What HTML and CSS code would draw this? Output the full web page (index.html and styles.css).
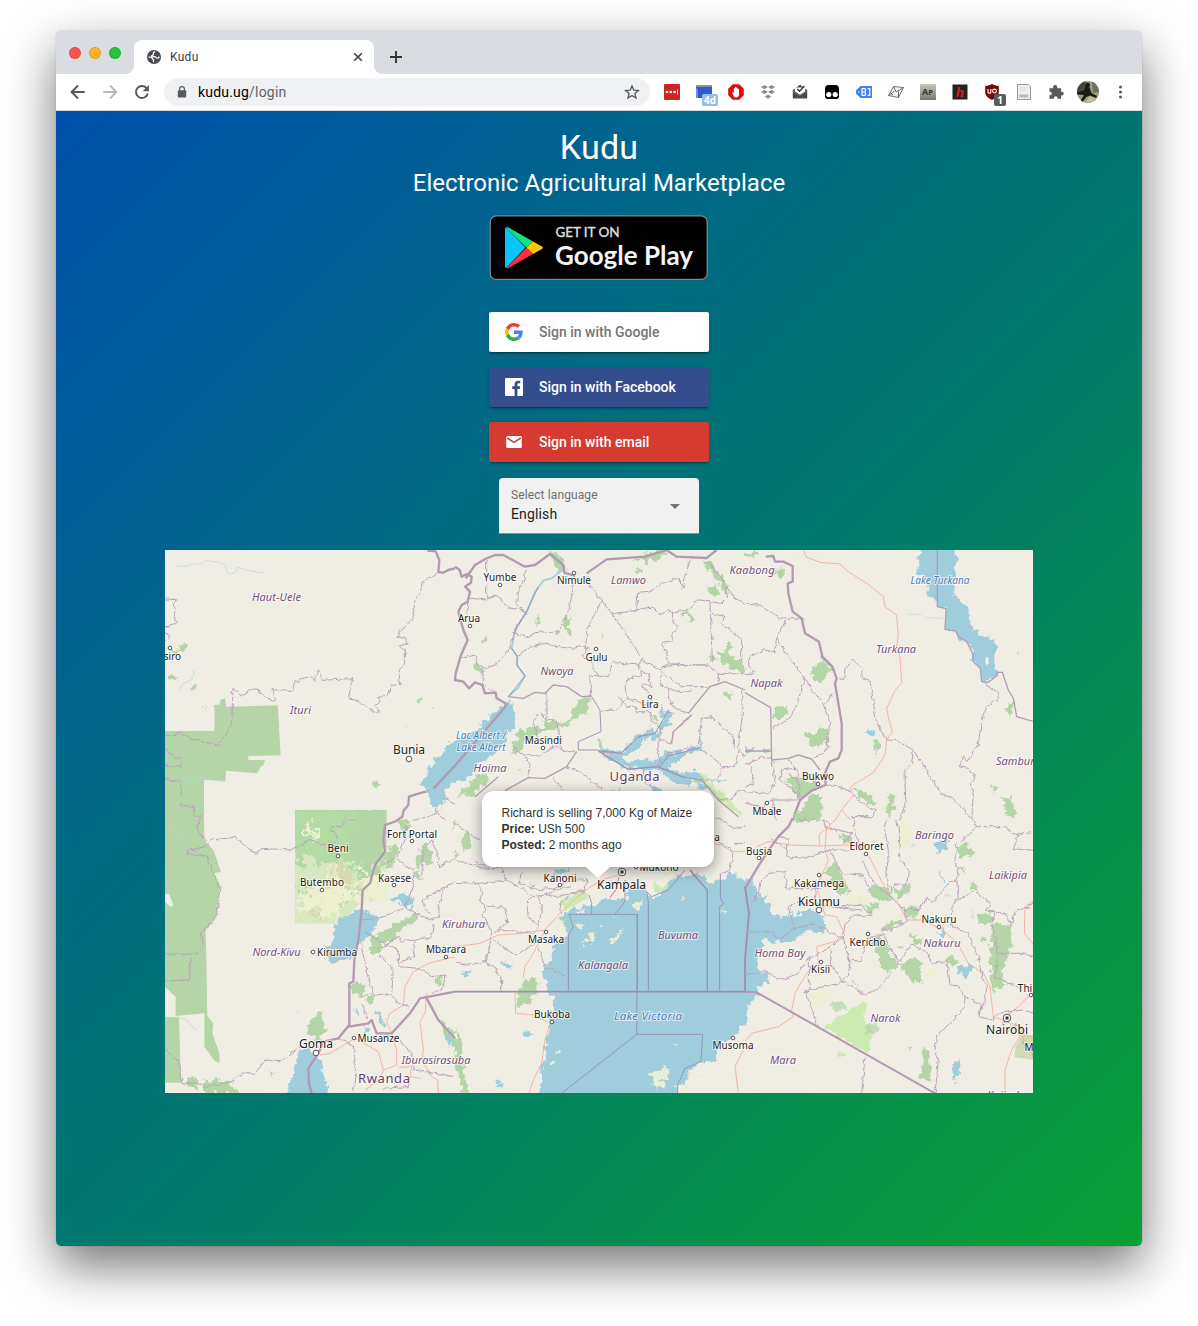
FILE: index.html
```html
<!DOCTYPE html>
<html lang="en">
<head>
<meta charset="utf-8">
<title>Kudu</title>
<link rel="stylesheet" href="styles.css">
</head>
<body>
<div class="window">
  <div class="tabstrip">
    <div class="lights"><i class="red"></i><i class="amber"></i><i class="green"></i></div>
    <div class="tab">
      <svg class="globe" viewBox="0 0 14 14"><circle cx="7" cy="7" r="7" fill="#484b4f"/><path d="M8.200 1.700Q6 2.300 6.300 3.800T4.800 5.600q-.6 1.300 1 1.200 2.700-.4 3.400.7.600 1 2 .6l1.200-1.300M1.500 7.200q3.300-.3 3.800 1.200.2 1.200 1.300 1.400-.6 1.400.2 2.400" fill="none" stroke="#fff" stroke-width="1.300"/></svg>
      <span class="tab-title">Kudu</span>
      <svg class="x" viewBox="0 0 10 10"><path d="M1.200 1.200 8.800 8.800M8.800 1.200 1.200 8.800" stroke="#3c4043" stroke-width="1.600"/></svg>
    </div>
    <svg class="plus" viewBox="0 0 14 14"><path d="M7 1v12M1 7h12" stroke="#303336" stroke-width="1.900"/></svg>
  </div>
  <div class="toolbar">
    <div class="nav">
      <svg viewBox="0 0 16 16"><path d="M14.700 8H2M8 1.500 1.600 8 8 14.500" fill="none" stroke="#55585c" stroke-width="1.900"/></svg>
      <svg viewBox="0 0 16 16"><path d="M1.300 8H14M8 1.500 14.400 8 8 14.500" fill="none" stroke="#b6b8ba" stroke-width="1.900"/></svg>
      <svg viewBox="0 0 16 16"><path d="M13 4.700A6 6 0 1 0 13.800 9.500" fill="none" stroke="#55585c" stroke-width="1.900"/><path d="M14.900 1v6.200H8.700z" fill="#55585c"/></svg>
    </div>
    <div class="omnibox">
      <svg class="lock" viewBox="0 0 10 12"><rect x=".8" y="4.300" width="8.400" height="7.200" rx="1" fill="#55585c"/><path d="M2.600 5V3.100a2.400 2.400 0 0 1 4.800 0V5" fill="none" stroke="#55585c" stroke-width="1.200"/></svg>
      <span class="url">kudu.ug<em>/login</em></span>
      <svg class="star" viewBox="0 0 16 16"><path d="m8 1.900 1.800 4.200 4.600.4-3.500 3 1.100 4.500L8 11.600 4 14l1.100-4.500-3.500-3 4.600-.4z" fill="none" stroke="#55585c" stroke-width="1.300"/></svg>
    </div>
    <div class="ext">
      <span><svg viewBox="0 0 16 16"><rect width="16" height="16" rx="1.200" fill="#cd2424"/><g fill="#fff"><circle cx="3" cy="8" r="1.300"/><circle cx="6.800" cy="8" r="1.300"/><circle cx="10.600" cy="8" r="1.300"/><path d="M13 5.500h.9v5H13z"/></g></svg></span>
      <span><svg viewBox="0 0 16 16"><path d="M0 2h16v12H1z" fill="#3159cc"/><path d="M0 1h16v2H0z" fill="#8a94a8"/><path d="M0 5h2v9H0z" fill="#6b8de8"/></svg><b class="badge days">4d</b></span>
      <span><svg viewBox="0 0 16 16"><path d="M4.800.2h6.400L15.800 4.800v6.400l-4.600 4.600H4.800L.2 11.200V4.800z" fill="#e2090b"/><path d="M4.200 8.500 5 8l.8.900V4.400q.7-.9 1.200 0V3.200q.8-.9 1.400 0v.9q.8-.8 1.300 0v1.100q.8-.7 1.300 0v5.300c0 1.800-1 2.900-3 2.900-1.800 0-2.500-1-3.800-4.900z" fill="#fff"/></svg></span>
      <span><svg viewBox="0 0 16 16" fill="#8d8d8d"><path d="m4.500 1 3.400 2.100-3.400 2.200L1 3.100zM11.500 1 15 3.100l-3.500 2.200-3.400-2.200zM4.500 5.700l3.400 2.200-3.400 2.100L1 7.900zM11.500 5.700 15 7.900 11.500 10 8.100 7.900zM8 10.400l3.300 2.100L8 14.700l-3.300-2.200z"/></svg></span>
      <span><svg viewBox="0 0 16 16"><path d="M.8 6 8 .8 15.200 6v8.500H.8z" fill="#4a4a4a"/><path d="M2.800 3.500h10.400v4L8 10.700 2.800 7.500z" fill="#fff"/><path d="m5.300 5 2.200 2.200 5-5.200" fill="none" stroke="#333" stroke-width="1.300"/><path d="m.8 7 7.200 4.700L15.200 7" stroke="#888" fill="none" stroke-width=".6"/></svg></span>
      <span><svg viewBox="0 0 16 16"><path d="M1 4.500Q1 1 4.500 1h7Q15 1 15 4.500v8q0 2.500-2.500 2.500h-9Q1 15 1 12.500z" fill="#050505"/><circle cx="4.800" cy="10.500" r="2.600" fill="#fff"/><circle cx="11.200" cy="10.500" r="2.600" fill="#fff"/></svg></span>
      <span><svg viewBox="0 0 16 16"><path d="M4.500 2H16v12H4.500L0 9.500v-3z" fill="#3d7ff5"/><path d="M6 4.700h3q1.300 1.600 0 3.300 1.300 1.700 0 3.300H6zM6 8h3.500M11.500 4.700h2.300v6.600h-2.300" fill="none" stroke="#fff" stroke-width="1.200"/><path d="M2 8h1.500" stroke="#fff"/></svg></span>
      <span><svg viewBox="0 0 16 16"><path d="M5.500 2.500 15.500 3.500 10.500 13.500.5 11.500z" fill="#f6f6f6" stroke="#777"/><path d="M5.500 2.500 8.200 8l7.300-4.500M.5 11.500l6-4.500M10.500 13.500V7.500M3 9.500l2 1.500" fill="none" stroke="#555" stroke-width=".9"/></svg></span>
      <span><svg viewBox="0 0 16 16"><defs><linearGradient id="ap" x2="0" y2="1"><stop stop-color="#c6c7bd"/><stop offset="1" stop-color="#77786e"/></linearGradient></defs><rect width="16" height="16" fill="url(#ap)"/><text x="2" y="10.500" class="ap">A<tspan class="p">P</tspan></text></svg></span>
      <span><svg viewBox="0 0 16 16"><rect x=".5" y=".5" width="15" height="15" fill="#222"/><text x="8" y="13.300" text-anchor="middle" class="hh">h</text></svg></span>
      <span><svg viewBox="0 0 16 16"><path d="M8 0q3.500 2 6.800 2v6c0 4-3 6-6.800 8-3.800-2-6.800-4-6.800-8V2Q4.500 2 8 0z" fill="#7c0609"/><path d="M4 5v3.200q0 1 1.400 1t1.400-1V5" fill="none" stroke="#fff" stroke-width="1.100"/><circle cx="10.500" cy="7" r="1.900" fill="none" stroke="#fff" stroke-width="1.100"/></svg><b class="badge one">1</b></span>
      <span><svg viewBox="0 0 16 16"><path d="M1.500.5h11l2 2v13h-13z" fill="#eee" stroke="#999"/><path d="M3.300 10.500h9v3h-9z" fill="#bbb"/><path d="M3.500 4h7M3.500 6h8" stroke="#dcdcdc"/></svg></span>
      <span><svg viewBox="0 0 16 16"><path d="M1.500 4.200h3.700C4.800 2.500 5.500 1 7.200 1S9.600 2.500 9.200 4.200h3.900v3.500c1.500-.3 2.700.5 2.700 1.900s-1.200 2.200-2.700 1.800v3.400H9.600c.2-1.600-.6-2.500-1.900-2.500s-2.100.9-1.900 2.500H1.500v-3.500c1.500.1 2.300-.7 2.300-1.800s-.8-1.900-2.300-1.800z" fill="#55585c"/></svg></span>
      <span><svg class="avatar" viewBox="0 0 22 22"><clipPath id="av"><circle cx="11" cy="11" r="11"/></clipPath><g clip-path="url(#av)"><path d="M0 0h22v22H0z" fill="#a39d80"/><path d="M0 0h9l-2 8-7 4z" fill="#434940"/><path d="M15 1h7v10l-6 1z" fill="#6f7267"/><path d="M8.500 2.500q2.500-2 4.500.5l-.5 3.200L14.500 12l5.500 3-1 2-6-2.500-3.500 1.500L4.500 22H2l5-8-7-.5v-2l7-3z" fill="#1a1b18"/><path d="m12.500 15.500 7 2-4.500 4H8.500z" fill="#c2bd9d"/></g></svg></span>
      <span><svg viewBox="0 0 16 16" fill="#55585c"><circle cx="8.500" cy="3" r="1.500"/><circle cx="8.500" cy="8" r="1.500"/><circle cx="8.500" cy="13" r="1.500"/></svg></span>
    </div>
  </div>
  <main class="page">
    <h1>Kudu</h1>
    <h2>Electronic Agricultural Marketplace</h2>
    <svg class="play" viewBox="0 0 220 66">
      <rect x="1.200" y=".9" width="217" height="63.500" rx="6" fill="#000" stroke="#858585" stroke-width="1.300"/>
      <path d="M17 12.500 36.500 32.500 17 53Q16 52.500 16 51V14q0-1.200 1-1.500z" fill="#08c4f8"/>
      <path d="M17 12.400q1-.8 2.500 0L44 26.500l-6.500 6.200z" fill="#0be579"/>
      <path d="m44 26.500 8.500 4.800q2.800 1.400 0 2.900L44 39l-6.500-6.300z" fill="#ffc407"/>
      <path d="M37.500 32.700 44 39 19.500 53q-1.500.8-2.500 0z" fill="#f8333f"/>
      <text class="getit" x="66.500" y="21.500" textLength="64">GET IT ON</text>
      <text class="gplay" x="66" y="49.500" textLength="138" lengthAdjust="spacingAndGlyphs">Google Play</text>
    </svg>
    <div class="signin">
      <button class="btn google"><svg viewBox="0 0 48 48"><path fill="#EA4335" d="M24 9.500c3.540 0 6.710 1.220 9.210 3.600l6.850-6.850C35.900 2.380 30.470 0 24 0 14.620 0 6.510 5.380 2.560 13.220l7.980 6.190C12.430 13.720 17.740 9.500 24 9.500z"/><path fill="#4285F4" d="M46.980 24.550c0-1.570-.15-3.090-.38-4.550H24v9.020h12.940c-.58 2.960-2.260 5.480-4.780 7.180l7.730 6c4.510-4.180 7.090-10.360 7.090-17.650z"/><path fill="#FBBC05" d="M10.530 28.590c-.48-1.450-.76-2.990-.76-4.590s.27-3.140.76-4.590l-7.980-6.190C.92 16.460 0 20.120 0 24c0 3.880.92 7.540 2.560 10.780l7.970-6.190z"/><path fill="#34A853" d="M24 48c6.480 0 11.930-2.130 15.890-5.810l-7.730-6c-2.150 1.450-4.920 2.300-8.160 2.300-6.260 0-11.570-4.220-13.470-9.910l-7.980 6.190C6.510 42.620 14.620 48 24 48z"/></svg>Sign in with Google</button>
      <button class="btn facebook"><svg viewBox="0 0 18 18"><path d="M1 0h16a1 1 0 0 1 1 1v16a1 1 0 0 1-1 1h-4.600v-7h2.400l.4-2.700h-2.800V6.600c0-.8.300-1.300 1.400-1.300h1.500V2.900c-.3 0-1.100-.1-2.100-.1-2.200 0-3.600 1.300-3.600 3.600v1.900H7.200V11h2.400v7H1a1 1 0 0 1-1-1V1a1 1 0 0 1 1-1z" fill="#fff"/></svg>Sign in with Facebook</button>
      <button class="btn email"><svg viewBox="0 0 18 18"><path d="M2.700 3h12.600q1.500 0 1.500 1.500v9q0 1.500-1.500 1.500H2.700q-1.500 0-1.500-1.500v-9Q1.200 3 2.700 3z" fill="#fff"/><path d="M2.200 5 9 9.300 15.800 5" fill="none" stroke="#d53b30" stroke-width="1.500"/></svg>Sign in with email</button>
    </div>
    <div class="select"><div><label>Select language</label><span>English</span></div><i></i></div>
    <div class="mapbox">
      <svg class="map" viewBox="165 550 868 543">
        <defs>
          <filter id="coast" x="-5%" y="-5%" width="110%" height="110%" color-interpolation-filters="sRGB"><feTurbulence type="fractalNoise" baseFrequency=".055" numOctaves="3" seed="4"/><feDisplacementMap in="SourceGraphic" scale="30" xChannelSelector="R" yChannelSelector="G"/></filter>
          <filter id="wobble" x="-5%" y="-5%" width="110%" height="110%" color-interpolation-filters="sRGB"><feTurbulence type="fractalNoise" baseFrequency=".06" numOctaves="2" seed="9"/><feDisplacementMap in="SourceGraphic" scale="15" xChannelSelector="R" yChannelSelector="G"/></filter>
          <filter id="mottle" x="-10%" y="-10%" width="120%" height="120%" color-interpolation-filters="sRGB"><feTurbulence type="fractalNoise" baseFrequency=".04" numOctaves="5" seed="2"/><feDisplacementMap in="SourceGraphic" scale="120" xChannelSelector="R" yChannelSelector="G"/></filter>
          <clipPath id="beni"><path d="M390-31H665V242L590 246 525 311H390z"/></clipPath>
        </defs>
        <!-- north-west -->
        <g transform="translate(165 550) scale(.33333)">
          <path class="park" d="M0 543H148V474L146 464H164L166 449 180 445 183 471 338 466 347 616 250 618V630H300L296 645 287 650 277 670 183 662 181 692 117 690V815H0V745L12 760 18 815H0z"/>
          <g class="gr"><path d="M20 297 38 300 55 280 68 290 60 302 45 305 36 311 18 306zM78 408 92 402 98 412 86 421 79 416zM10 378 35 375 33 388 12 387zM625 697 640 690 646 704 636 713 626 710zM752 450 763 442 770 450 760 458zM800 470l12 2-4 5zM845 575l10-7 6 8-8 4zM112 470l10-2-2 8zM720 525l6 2-3 5zM635 452l8-10 4 6z"/></g>
          <path class="creek" d="M35 49 72 48 80 42 108 42 130 28 138 35 165 36 180 45 187 66 195 73 212 67 218 52 245 60 275 66 300 69M42 420 55 400 76 392 88 375 84 360M60 703 80 688 107 685 182 695"/>
          <path class="b1" d="M0 147 35 149 25 165 30 180 26 212 38 213 35 222 10 230 0 229M0 248 10 255 9 268 0 275M0 558 22 556 42 549 78 567 163 586 171 568 189 545 200 518 204 415 231 436 265 418 280 417 284 431 325 454 332 449 319 419 387 425 390 390 402 398 407 387 440 377 448 392 460 355 472 391 555 386 563 382 558 410 551 440 556 447 588 455 614 479 638 491 640 480 626 465 645 455 644 441 659 440 672 430 682 405 703 407 703 370 709 350 718 342V300L706 290 710 282 727 283 726 265 697 262 700 250 744 205 750 150 768 120 771 101 818 67M0 597 22 618 43 625 53 633 47 650 30 651 0 645M0 689 45 695 50 715 45 765 85 770 87 798 108 800 110 811M560 811 600 800 628 795 632 811"/>
          <path class="b3" d="M787 2 812 4 823 30 820 66 835 68 850 60 870 55"/>
          <path class="b3" d="M690 815 712 800 716 782 730 765 732 740 752 733 785 724 805 716"/>
          <path class="b1" d="M815 710V790L840 811M815 790 780 803 745 811M817 725 845 747 870 760"/>
        </g>
        <!-- north -->
        <g transform="translate(455 550) scale(.33333)">
          <g class="gr"><path d="M288 7 310 16 325 30 327 68 307 62 295 40zM535 24 560 28 575 10 605 0 635 4 641 14 612 20 607 37 592 30 575 34 540 30zM540 52l18 14-3 12-13-13zM742 28 775 33 780 55 803 75 811 100 824 105 820 128 803 115 790 95 766 65zM768 112 785 106 790 120 782 140 768 142 762 130zM243 195 260 206 256 218 242 221zM322 207 337 196 348 207 340 228 356 260 345 262 330 230zM302 246l20-5-2 15-14-2zM84 263l14-3-2 17-10 3zM383 440 409 440 396 490 370 497 335 533 310 527 262 542 255 558 235 560 210 575 203 600 170 612 175 582 188 560 186 545 228 533 260 535 268 514 325 517 345 510 362 468zM426 575 440 570 447 585 436 596 427 590zM592 497l20 3-4 9-14-1zM806 432l12-7 12 8v9l-18 1zM679 185 700 180 706 190 722 205 712 220 702 210 697 193 681 191zM764 315 782 325 777 340 765 336zM784 307 805 310 808 295 830 272 832 290 820 305 830 325 860 331 870 345V372L835 358 825 340 800 343 792 325zM60 680 85 668 100 685 95 705 75 710 50 745 30 730 10 744 12 728 40 710zM55 345 65 340 90 362 78 371 62 360zM470 716l22 1-6 12h-16zM768 250l8 2-3 20-6-5zM440 255l6 4-4 5zM508 235l8 6-4 3z"/></g>
          <g class="yg"><path d="M705 670 740 665 770 700 815 740 860 790 850 800 800 755 760 715 720 700zM848 535l10 10-10 15zM190 655l14-2-4 14z"/></g>
          <path class="w" d="M-107 700-75 655-60 630 0 570 45 552 80 522 115 485 150 470 165 440 180 492 176 530 155 555 140 590 100 620 70 640 55 668 20 693-8 705-25 720-38 768-70 772-78 735-90 712z"/>
          <path class="w" d="M428 605 440 590 460 598 500 606 520 587 510 580 540 578 530 562 560 550 575 544 590 520 597 550 615 544 612 525 628 510 615 490 620 465 628 485 642 483 650 500 640 517 657 524 636 530 620 545 614 562 600 570 585 558 565 570 560 590 540 600 500 622 515 640 560 628 610 630 625 618 632 605 655 612 660 597 700 605 695 588 728 590 733 560 738 584 744 600 700 610 680 625 655 638 640 652 680 670 720 662 745 688 735 700 708 690 700 708 660 700 625 675 600 660 570 667 550 655 520 658 490 640 460 620zM585 700 620 725 605 726 590 715zM730 700 752 707 753 722 732 716zM765 685 780 695 820 690 790 703z"/>
          <path class="creek big" d="M325 58 290 85 265 92 240 125 215 185 180 240 170 295 187 320 186 345 210 378 190 413 160 440"/>
          <path class="creek" d="M290 5 330 50 345 72"/>
          <path class="b3" d="M0 50 14 60 20 80 35 72 50 80 48 98 30 110 45 125 38 155 20 165 10 185 25 240 38 270 18 315 2 370 0 390 25 395 42 415 60 397 82 405 90 430 122 428 125 445 155 462 147 475 0 647-65 716M32 85 60 45 95 25 120 15H145L210 50 240 45 285 12 325 45 328 68 360 78M395 70 455 28 570 20 635 0 665 20 755 24 785 0"/>
          <path class="b1" d="M95 25V150L45 145M95 145 120 135 140 150 160 173 205 182 213 190 180 240 165 295 122 345 90 355 65 340 60 315 15 327M213 60 207 90 187 130 185 165 212 185M175 247 215 262 240 248 312 242 340 190 355 112 350 85M396 80 412 115 440 152 420 190 395 240 393 300 380 315 410 335 415 360 432 375 460 380 472 337 550 345 562 325 470 190 440 152M190 320 220 293 260 280 310 290 345 295 380 290 406 297M470 192 540 182 565 175 592 172 615 195 640 182 652 190 655 220 672 225 650 255 655 275 620 280 635 305 640 340 618 360 560 330M545 180 548 130 580 127 620 100 670 84 685 115 690 85 705 28M640 190 700 178 730 150 800 160 815 145 812 100 755 28M765 158 772 330 755 345 640 342M770 190 810 200 800 220 860 270 860 335M815 110 840 145 870 160M80 357 85 380 80 400 120 427M45 145 35 190 45 200M405 375 407 440M407 375 445 380M437 485 490 477 515 445 510 410 520 385 560 375 550 345M490 440 500 450 515 470 540 468 545 485 583 485M515 445 550 455 580 467M560 365 580 370 588 410 560 400 570 420 590 435 590 455M620 367 615 400 640 415 645 450 655 475 700 490M640 415 670 425 710 420M620 367 680 410 765 410M620 350 680 345 760 345 790 370 870 372M790 370 790 400M273 425V510L255 485M270 510 310 515 315 590 335 605 365 605M250 490 235 520 250 560M170 590 200 610 225 640 222 680M200 610 250 620 300 590 335 605M335 650 380 670 440 718M295 685 325 722M610 560V645M740 500 730 590M625 485 655 490M583 485 590 515 615 530 615 570 650 580 655 545 710 495M740 505 770 500 800 530 835 560V595M860 420 862 500 850 590 870 620M735 595 780 625 800 655 790 690 745 690M800 650 840 650 850 600M430 603 500 610 550 560 600 550M565 660 570 700 610 722M610 650 640 610 730 590M740 690 770 720 800 755M790 750 830 745 850 720 870 725"/>
          <path class="b2" d="M160 440 205 445 240 427 270 430 295 405 335 410 380 440 410 438M365 605 335 650 270 685 220 683 150 722M130 680 60 740M700 490 720 465 765 410 780 405 810 395 870 420M650 580 655 545 710 495M430 603 520 658 605 650 680 680 740 690 790 750 850 800"/>
          <path class="mv" d="M430 603 520 658 605 650 640 660 690 685M615 650 640 618 735 593M440 603 500 610 550 560 600 550 640 480M370 600 430 600M410 440 435 480 438 545 370 575V600M180 240 215 185 250 110M170 295 187 320 186 345 210 378 160 440"/>
        </g>
        <!-- north-east -->
        <g transform="translate(745 550) scale(.33333)">
          <g class="gr"><path d="M0 12 35 8 30 18 0 20zM92 55 115 56 126 70 110 88 90 72zM228 320 255 345 265 360 245 375 228 398 200 378 198 350 222 340zM84 480 95 466 125 468 131 488 112 506 92 505zM176 545 210 550 225 538 252 545 250 575 225 580 218 592 188 588 186 565zM390 568 405 580 398 608 386 592zM785 460 802 458 805 488 790 494 782 478zM742 708 758 712 758 724 745 727zM768 745 800 742 812 800H790L780 770zM330 718 350 718 395 755 390 768 365 762 340 742zM430 738 452 732 445 780 430 811 420 775zM124 688 155 680 205 700 240 712 200 720 165 750 140 722zM195 735 228 735 230 800 190 811H150zM80 635h13v8H80zM815 305l8 5v15z"/></g>
          <path class="yg" d="M65 590h14v22H65z"/>
          <path class="w" d="M525-20H620L640 28 625 50 632 135 650 155 670 185 680 230 712 260 752 265 755 378 730 398 710 392 706 355 683 330 680 290 640 260 632 243 598 240 605 175 578 170 565 142 545 130V85L517 70z"/><path class="land" d="M722 322 730 320 732 340 724 346 720 336z"/>
          <path class="w" d="M352 548 368 546 375 533 384 545 372 558zM0 600 30 588 25 605 0 615zM55 595 75 598 72 610 55 605z"/>
          <path class="creek" d="M490 193H530M540 203 595 205"/>
          <path class="road" d="M176 0 182 20 225 37 285 42 310 65 372 105 415 140 420 170 455 195 460 255 455 290 465 320 470 400 450 420 435 455 425 475 432 510 442 545 425 570 420 615 385 668 340 695 315 712 325 735 290 780 270 811M290 780 318 811"/>
          <path class="b3" d="M62 20 85 18 90 35 115 35 143 48 143 95 128 100 130 130 143 185 170 205 180 250 222 275 232 320 262 350 275 385 270 400 290 520V600L280 625 255 635 240 670 242 705 200 722 165 750 150 790 145 811"/>
          <path class="b2" d="M577 0V170L603 176 600 238 632 243 640 260 665 275 683 310 685 335 706 355 710 395 730 397 755 378 758 367 772 367 790 420 805 445 815 500 870 516"/>
          <path class="b1" d="M0 163 45 165 100 203 175 208M122 210 95 260 90 305 55 300 15 320 10 345 27 368 0 372M95 260 115 300 180 385 155 465 135 505 80 538M180 385 200 420 235 460 255 510 245 600 205 625M235 470 265 430M275 385 297 388 300 355 325 330 350 355 352 385 375 392 395 520 427 570 460 572 505 600 590 733 612 737 680 805M505 600 500 640 480 660 482 760 465 811M727 398 730 410 760 428 758 450 725 470 710 510 700 585 680 615 665 635 655 620 643 650 670 655 690 680 675 700 685 725 680 811M0 645 50 622 80 625 90 700 70 730 0 725M130 628 150 655 110 660 105 690 145 720 165 750M155 650 165 740M130 670 160 690 200 670 215 700M245 705 290 712 320 728M0 760 50 770 80 750 165 750M80 750 95 811M20 650 25 700 0 710M325 735 350 760 390 780 385 800 320 800"/>
          <path class="b2" d="M0 428 77 473 80 630 130 625 160 615 200 627 225 660M80 603H0"/>
        </g>
        <!-- south-west -->
        <g transform="translate(165 820) scale(.33333)">
          <path class="park" d="M0-10H117L118 60 145 90 168 155 148 160 165 195 155 290 122 330 125 480 127 588 145 610 142 640 163 700 164 730 148 722 118 680V580L32 588V530L0 500zM0 590 42 592 48 788H0z"/>
          <g class="gr"><path d="M65 780 100 776 90 808 55 795zM115 780 195 782 200 800 235 820H115zM425 628 440 592 470 577 472 600 487 630 460 660 427 642zM552 500 575 485 600 500 595 520 628 530 632 545 605 548 600 530 560 522zM617 350 650 340 690 310 735 290 760 285 745 310 700 335 690 360 655 370 630 410 615 400zM660 110 685 70 700 80 690 130 660 150zM700 0 740 0 720 40 700 20zM760 95 785 60 808 130 770 130 755 160 770 180 750 175zM815 470 830 462 828 490 815 500zM317 750 330 758 318 770zM820 600 840 610 870 650V690L835 640zM860 0 870 0V40z"/></g>
          <path class="land" d="M0 222 12 222 25 255 18 262 0 245z"/>
          <g clip-path="url(#beni)">
            <path class="fw" d="M380-42H675V320H380z"/>
            <g class="mottle">
              <path class="fg" d="M360-60H700V60L650 130 625 175 570 165 560 130 515 120 500 150 450 110 360 130z"/>
              <path class="park" d="M560-60H700V80L650 130 620 170 570 130 540 80zM400 200 420 190 430 240 410 260zM530 200 570 190 560 240 535 250z"/>
              <path class="yy" d="M395 240 450 180 480 220 530 120 555 200 590 230 520 240 510 300 440 260 410 290zM420 20 440 10 460 50 440 60zM480 260 520 270 500 300zM590 170 680 150 690 270 590 260z"/>
              <path class="tan" d="M510 130 540 120 560 200 530 220zM450 190 480 180 480 210zM440 270 460 260 470 300z"/>
            </g>
          </g>
          <path class="w" d="M477 376 495 375 510 320 525 295 560 282 590 262 605 275 640 290 632 330 600 360 580 380 565 405 540 420 495 430 490 405zM673 238 690 228 720 222 748 235 742 258 720 265 700 245zM365 811 385 770 400 690 430 680 450 710 470 720 482 790 494 800 482 835H372zM568 563l14 10-3 15-10-5zM632 570 655 600 658 622 640 605zM598 618l14 8-4 14-12 6zM845 640l14 20-4 20z"/>
          <path class="creek" d="M745 745 770 750 790 765 795 750M390 575h12M35 590 65 600 95 632M5 10 30 20 55 70"/>
          <path class="road" d="M465 705 495 700 520 685 570 655 600 672 640 695 655 750 670 745 695 735 695 690 680 640 665 605 675 580 715 555 720 500 745 455 790 430 870 410M785 520 780 580 765 605 775 690 770 720 800 770 818 780 820 820M655 752 640 780 600 811M770 775 735 770 740 740 700 742"/>
          <path class="b3" d="M690 5 660 15 655 60 660 95 630 135 615 190 593 210 590 270 580 360 568 420 565 485 553 490V615L520 655 475 665 460 700 430 745 432 790 440 820M553 620 610 610 620 600 635 640 680 640 735 580 765 535 870 515M785 535 820 600 870 655"/>
          <path class="b1" d="M105-5 97 20 110 50 135 70 120 80 75 90 65 100 85 107 125 107 145 160 165 200 155 290 110 340 115 380 95 402 0 402M135 60 210 52 250 85 270 100 295 85 375 90 400 80 430 60 480 75 515 60 515 40 490 30 500 18 530 20 545 0 570 0M80 405 70 480 0 483M0 690 40 725 50 788 95 790 120 800 200 785 215 770 255 755 270 765 300 720 345 725 380 700 410 680M660 130 690 115 745 150 745 200 720 260M745 168H770L775 90 800 60 822 110 820 140 870 115M720 260 740 275 800 300 820 290 825 240 840 200 775 240 780 270 800 285M840 200 870 185M590 300 640 295 715 265M600 335 665 375 640 385 645 405 685 450 680 520 625 525 600 430 588 370M665 375 700 350 710 365 750 360 800 350 805 310M750 360 745 410 700 430 700 390 665 370M700 440 760 445 800 470 840 465 835 500 800 525M680 525 700 550 730 560M520 655 565 675 570 720 572 780 565 811M640 640 700 655 740 700 745 750 870 770M590 550 610 600M800 400 870 390M690 120 720 60 725 0M655 805 730 800 735 770"/>
        </g>
        <!-- Lake Victoria -->
        <g transform="translate(455 780) scale(.33333)">
          <g class="gr"><path d="M185 640 210 605 235 590 250 605 250 640 230 650 225 670 190 680zM0 745 25 790 20 850 40 940H25L0 860zM320 410 340 405 342 440 325 430zM35 150 50 170 45 200 25 210 20 180zM222 315l20-6-5 18zM0 210 10 230 0 240z"/></g>
          <g class="yg"><path d="M320 365 350 350 380 330 400 345 370 375 330 390zM590 300 620 320 660 290 680 300 650 330 600 340z"/></g>
          <path class="w" d="M245 960 265 890 255 870 275 830 270 790 285 740 290 710 300 645 280 635 275 600 258 580 285 540 300 490 335 465 330 430 320 405 360 385 420 375 450 355 510 355 530 325 570 315 580 350 610 350 640 320 665 285 700 290 730 270 760 310 800 300 830 275 850 295 890 295 915 355 945 375 955 410 980 415 1010 395 1015 410 1060 390 1090 395 1120 440 1100 460 1050 450 1025 475 960 490 935 475 910 510 905 565 940 590 935 610 905 620 910 640 875 680 880 730 850 740 850 760 820 780 790 790 785 840 730 850 700 870 700 900 665 925 665 960zM285 280 320 265 350 265 325 285zM205 765 225 755 232 765 215 772zM135 545 180 560 170 568 140 555zM20 580 50 567 45 580 30 588zM118 900 140 910 135 925z"/>
          <g class="isle"><path d="M355 430 380 425 390 435 375 445zM405 455 420 460 422 480 400 490 380 485 405 475zM380 495 390 500 382 505zM460 490 490 455 510 450 485 480 470 497zM532 385 560 355 558 380 545 392zM590 915 600 895 580 880 615 875 620 855 640 865 640 895 620 900 630 920 600 925zM800 385 812 395 804 403zM300 830 312 800 310 820zM360 395l20-8 10 5-18 9zM428 440l15-8-4 18zM470 405l15-2-4 6zM680 345l12 5-6 7zM655 790l10 4-8 6zM285 850l14-10-5 18zM720 890l30-15-5 20zM690 915l20 5-10 12z"/></g>
          <path class="road" d="M0 500 40 495 75 490 130 465 200 460 270 450 310 405 350 365 400 325 440 300 490 285M265 460 235 520 210 560 205 592M180 640 182 700 235 705 285 730 270 780 260 850 235 900 222 940M525 265 490 280M770 190 800 195 830 215 870 215M870 800 840 860 850 940"/>
          <path class="road red" d="M492 290 482 330 465 352"/>
          <path class="b1" d="M0 307 72 310 80 340 75 365 90 375 85 410 110 455 100 520 90 545 120 565 140 600V632M72 310 155 300 190 320 235 350 270 345 310 350 390 330 395 295M235 350 215 370 220 410 250 440 262 380 250 350M250 440 235 460 130 450M95 375 150 385 155 430 115 460M115 480 180 525 225 500 260 475M250 500 270 560 330 585M155 300 135 260 105 270 0 240M320 400 315 370 350 340 390 335M200 275 190 310 240 330 300 325 340 300 400 300M270 345 300 330 350 320M0 130 40 160 75 180M0 545 40 555 90 545M105 265 60 245M835 190 870 190M780 110 840 145 870 140M780 180 835 215 825 270 800 280"/>
          <path class="mv" d="M340 632V465L355 440 342 403H547L545 763 320 940M547 632V403M410 403 410 370 402 345M480 402 510 365V300M580 632V365L575 335 590 350 640 330 690 270M545 763H743L738 845 690 865 668 915V940M794 632V380L806 370 796 355V280"/>
          <path class="b2 m" d="M757 633V330L730 300 705 270"/>
          <path class="b3 m" d="M0 635H870"/>
        </g>
        <!-- Kenya -->
        <g transform="translate(745 820) scale(.33333)">
          <g class="gr"><path d="M235 155 262 135 280 125 288 160 300 180 312 215 280 228 270 195zM375 195 430 205 440 240 395 240 370 215zM450 210 497 190 490 220 460 235zM355 260 400 245 405 265 370 275zM480 260 520 260 515 290 490 295zM410 320 465 290 470 310 440 325 410 330zM380 350 405 345 425 380 430 405 400 410 385 380zM398 412 435 403 465 435 440 455 405 440zM465 430 510 410 530 440 525 488 500 490 490 460 465 450zM490 340 530 355 535 375 505 370zM640 110 645 75 665 65 683 95 668 112zM600 415l25-5 12 15-20 10zM700 280 740 275 745 300 720 320 703 305zM740 330 750 310 795 315 800 380 780 440 755 475 735 430zM740 465 775 460 770 500 740 512zM522 770 535 735 533 685 550 690 560 750 555 785zM145-20 190-20 185 5 150 5zM290 40 318 40 318 65 295 70zM320 485l14-3 1 12zM485 680l22 5-8 12zM675 190l15-10 5 30-15-5zM700 355l20 3-5 12zM455 380l18-5 4 12-18 2zM500 70l10 5-6 10zM648 145l14-3-4 12z"/></g>
          <g class="yy wob"><path d="M190 525 230 510 260 520 240 545 210 560zM465 0 490 0 500 40 480 90 460 70zM530 470 565 440 585 450 560 475zM290 235 350 215 370 245 330 255z"/></g>
          <path class="yg" d="M240 620 270 595 310 575 350 545 365 560 355 600 385 640 370 700 340 685 285 655zM285 698h12v12h-12z"/>
          <g class="gr soft"><path d="M260 550 300 540 305 570 270 580zM355 620 400 600 395 640 365 645z"/></g>
          <path d="M830 645H870V720L808 712 812 680z" fill="#cfdab4"/>
          <path class="w" d="M568 65 605 60 605 75 585 102zM582 150l8 5 8 25-5 12zM580 335 597 325 600 345 585 352zM638 442 675 430 680 455 660 470 642 460zM636 715 642 760 628 788 625 745zM56 225l10-4-4 12zM600 222l8 2-6 8zM677 265l8 20-1 10z"/>
          <path class="road" d="M35 80 70 65 140 75 225 78 300 75 340 75M225 80 222 45 250 20 270 0M245 20 240 90 250 120 240 145 215 200 240 285 275 290 300 345 285 360 215 380 220 430 185 460 150 520 140 570 145 590 100 620 20 640 0 665M370 105 400 165 430 220 465 260 485 300 530 300 585 325 635 365 670 430 715 460 735 500 745 590 785 605M785 590 820 560 870 510M785 600 825 650 800 690 780 750 780 820M825 640 870 655M870 240 840 260 838 340 870 380"/>
          <path class="b3" d="M143-5 130 20 100 50 75 85 45 130 15 180 0 205"/><path class="b3 str" d="M0 515 35 517 570 820"/><path class="b3 m" d="M0 200 12 280 0 420V515"/>
          <path class="b1" d="M20 250 40 220 50 180 75 160 120 155 125 205 165 205 215 200 210 250 270 262 350 270M100 50 130 55 125 110 180 115 240 95 250 90 350 90 330 40 325-5M80 60 130 90M130 260 150 250 190 250M130 262 150 330M0 337 80 335 100 362 150 325 200 312 240 330 290 355M0 463 60 455 110 480 160 460 185 420 255 380 290 350M193 410V505L180 520 200 565 218 620M193 510 300 485 360 525 400 505 440 460M290 350 300 375 315 430 310 465 290 485M255 380 260 440 295 485M255 90 275 130 290 160 350 165M350 165 375 205M275 262 350 255 380 290M380 270 380 290 330 285 300 310 295 350 310 420 350 425 355 385 380 350 420 340M350 120 390 195 430 225 440 210 425 180 430 90 418 20 425-5M430 225 475 265 490 305 475 310 440 330 410 330 460 430 480 400 500 375 545 395 560 430 605 425 615 490 640 500 660 530 658 565 575 650 570 690 580 720 570 820M660 530 710 555 700 590 745 600M455 0 465 40 460 110 490 150 485 195 450 195 435 210M470 260 520 270 545 230 560 250 615 185 635 180 640 235 625 250 620 320 670 340 705 425 715 480 725 500 720 540 700 590M640 240 690 210 735 250 725 270 750 280 740 310 760 400 750 470 735 450M685 0 695 20 780 20 800 40 820 45 860 35M695 20 635 75 630 120 640 170 630 190M820 40 805 85 870 95M360 710 350 820M735 275 780 280 800 310 815 270 850 265 870 240M760 400 830 400 870 410M750 470 825 505M745 600 760 580 830 570 870 580M200 210 245 200M160 0 240 0 300 65 320 40 240 20M235 0 240 20M770 605 830 620 835 670 870 710"/>
        </g>
        <g class="dots"><circle cx="500" cy="585" r="1.800"/><circle cx="470" cy="626" r="1.800"/><circle cx="574" cy="573" r="1.800"/><circle cx="596" cy="649" r="1.800"/><circle cx="650" cy="697" r="1.800"/><circle cx="543" cy="748" r="1.800"/><circle cx="170" cy="648" r="1.800"/><circle cx="409" cy="759" r="2.800"/><circle cx="818" cy="784" r="1.800"/><circle cx="767" cy="803" r="1.800"/><circle cx="338" cy="856" r="1.800"/><circle cx="322" cy="890" r="1.800"/><circle cx="412" cy="841" r="1.800"/><circle cx="394" cy="885" r="1.800"/><circle cx="313" cy="952" r="1.800"/><circle cx="446" cy="957" r="1.800"/><circle cx="354" cy="1038" r="1.800"/><circle cx="316" cy="1053" r="2.800"/><circle cx="560" cy="885" r="1.800"/><circle cx="546" cy="932" r="1.800"/><circle cx="552" cy="1022" r="1.800"/><circle cx="733" cy="1038" r="1.800"/><circle cx="636" cy="867" r="1.800"/><circle cx="759" cy="858" r="1.800"/><circle cx="866" cy="854" r="1.800"/><circle cx="819" cy="875" r="1.800"/><circle cx="819" cy="910" r="2.800"/><circle cx="868" cy="934" r="1.800"/><circle cx="821" cy="962" r="1.800"/><circle cx="939" cy="927" r="1.800"/><circle cx="1031" cy="995" r="1.800"/><circle cx="622" cy="872" r="3.800"/><circle cx="1007" cy="1018" r="3.800"/><path class="dot" d="M620.500 870.500h3v3h-3zM1005.500 1016.500h3v3h-3z"/></g>
        <g class="town">
          <text x="500" y="581" textLength="33">Yumbe</text><text x="574" y="584" textLength="34">Nimule</text><text x="469" y="622" textLength="22">Arua</text><text x="596.500" y="660.500" textLength="22">Gulu</text><text x="650" y="707.500" textLength="17">Lira</text><text x="543.300" y="743.500" textLength="37">Masindi</text><text x="172.500" y="659.500">siro</text><text x="818" y="780" textLength="32">Bukwo</text><text x="767" y="815" textLength="29">Mbale</text><text x="338" y="852" textLength="21">Beni</text><text x="322" y="886" textLength="44">Butembo</text><text x="412" y="837.500" textLength="50">Fort Portal</text><text x="394.500" y="881.500" textLength="33">Kasese</text><text x="337" y="956" textLength="40">Kirumba</text><text x="446" y="952.500" textLength="40">Mbarara</text><text x="378.500" y="1041.500" textLength="42">Musanze</text><text x="560" y="881.500" textLength="33">Kanoni</text><text x="659" y="871" textLength="39">Mukono</text><text x="546" y="943" textLength="36">Masaka</text><text x="552" y="1018" textLength="36">Bukoba</text><text x="733" y="1048.500" textLength="41">Musoma</text><text x="717" y="841">a</text><text x="759" y="854.500" textLength="26">Busia</text><text x="866.500" y="850" textLength="34">Eldoret</text><text x="819" y="887" textLength="50">Kakamega</text><text x="867.500" y="945.500" textLength="36">Kericho</text><text x="820.500" y="973" textLength="19">Kisii</text><text x="939" y="922.500" textLength="35">Nakuru</text><text x="1025" y="991.500">Thi</text><text x="1029" y="1050.500">M</text>
        </g>
        <g class="city"><text x="409" y="754" textLength="32">Bunia</text><text x="316" y="1048" textLength="34">Goma</text><text x="621.500" y="888.500" textLength="49">Kampala</text><text x="819" y="905.500" textLength="42">Kisumu</text><text x="1007" y="1034" textLength="42">Nairobi</text></g>
        <g class="country"><text x="634.500" y="781" textLength="50">Uganda</text><text x="384" y="1083" textLength="52">Rwanda</text></g>
        <g class="region"><text x="276.500" y="601" textLength="49">Haut-Uele</text><text x="300.500" y="713.500" textLength="21">Ituri</text><text x="628.500" y="584" textLength="35">Lamwo</text><text x="752" y="573.500" textLength="45">Kaabong</text><text x="557" y="675" textLength="33">Nwoya</text><text x="490" y="772" textLength="33">Hoima</text><text x="766.500" y="687" textLength="32">Napak</text><text x="896" y="653" textLength="40">Turkana</text><text x="1018.500" y="765" textLength="45">Samburu</text><text x="276.500" y="956" textLength="48">Nord-Kivu</text><text x="463.500" y="927.500" textLength="43">Kiruhura</text><text x="436" y="1064" textLength="69">Iburasirasuba</text><text x="603" y="968.500" textLength="50">Kalangala</text><text x="678" y="938.500" textLength="40">Buvuma</text><text x="780" y="957" textLength="51">Homa Bay</text><text x="934.500" y="839" textLength="39">Baringo</text><text x="1008" y="879" textLength="38">Laikipia</text><text x="942" y="947" textLength="37">Nakuru</text><text x="885.500" y="1021.500" textLength="30">Narok</text><text x="783" y="1064" textLength="26">Mara</text><text x="1006" y="1098.500" textLength="38">Kajiado</text></g>
        <g class="lake"><text x="940" y="583.500" textLength="59">Lake Turkana</text><text x="481" y="739" textLength="50">Lac Albert /</text><text x="481" y="751" textLength="49">Lake Albert</text><text class="big" x="648" y="1020" textLength="68">Lake Victoria</text></g>
      </svg>
      <div class="popup"><p>Richard is selling 7,000 Kg of Maize</p><p><b>Price:</b> USh 500</p><p><b>Posted:</b> 2 months ago</p></div>
    </div>
  </main>
</div>
</body>
</html>
```

FILE: styles.css
```css
* { box-sizing: border-box; }
html { background: #fff; }
body { margin: 0; height: 1326px; padding: 31px 0 0 56px; font-family: Roboto, sans-serif; }
svg { display: block; flex: none; }
.window { width: 1086px; height: 1215px; border-radius: 5px; overflow: hidden; box-shadow: 0 0 1px rgba(0,0,0,.45), 0 20px 50px rgba(0,0,0,.55); display: flex; flex-direction: column; }

.tabstrip { height: 43px; background: #d9dce1; display: flex; align-items: flex-end; }
.lights { display: flex; gap: 8px; padding: 0 13px 15px; }
.lights i { width: 12px; height: 12px; border-radius: 50%; border: 1px solid rgba(0,0,0,.12); }
.red { background: #ff544d; }
.amber { background: #ffb429; }
.green { background: #25c43b; }
.tab { position: relative; width: 240px; height: 34px; background: #fff; border-radius: 8px 8px 0 0; display: flex; align-items: center; padding: 0 11px 0 13px; }
.tab::before, .tab::after { content: ""; position: absolute; bottom: 0; width: 8px; height: 8px; }
.tab::before { left: -8px; background: radial-gradient(circle at 0 0, transparent 7.5px, #fff 8px); }
.tab::after { right: -8px; background: radial-gradient(circle at 100% 0, transparent 7.5px, #fff 8px); }
.globe { width: 14px; height: 14px; margin-right: 9px; }
.tab-title { font-size: 12px; color: #3c4043; flex: 1; letter-spacing: .3px; }
.x { width: 10px; height: 10px; }
.plus { width: 14px; height: 14px; margin: 0 0 10px 15px; }

.toolbar { height: 37px; background: #fff; border-bottom: 1px solid #d5d8dc; display: flex; align-items: center; padding: 0 6px 0 14px; }
.nav { display: flex; gap: 16px; margin-right: 14px; }
.nav svg { width: 16px; height: 16px; }
.omnibox { width: 486px; height: 28px; border-radius: 14px; background: #eff1f3; display: flex; align-items: center; padding: 0 10px 0 13px; margin-right: 6px; }
.lock { width: 10px; height: 12px; margin-right: 11px; }
.url { flex: 1; font-size: 14px; color: #000; letter-spacing: .2px; }
.url em { font-style: normal; color: #5f6368; }
.star { width: 16px; height: 16px; }
.ext { display: flex; }
.ext span { position: relative; width: 32px; height: 28px; display: flex; align-items: center; justify-content: center; }
.ext svg { width: 16px; height: 16px; }
.ext .avatar { width: 22px; height: 22px; }
.badge { position: absolute; color: #fff; font: bold 10px/12px "Open Sans", sans-serif; border-radius: 2px; text-align: center; }
.days { left: 14px; top: 16px; width: 16px; height: 12px; background: #94bde2; }
.one { left: 18px; top: 16px; width: 12px; height: 12px; background: #5b5b5b; }
.ap { font: 700 9px "Open Sans", sans-serif; fill: #333; }
.ap .p { font-size: 7.5px; }
.hh { font: italic bold 15px "Liberation Serif", serif; fill: #e21d24; }

.page { flex: 1; background: linear-gradient(135deg, #0050ac 0%, #007671 50%, #0aa034 100%); padding-top: 16px; display: flex; flex-direction: column; align-items: center; color: #fff; }
h1, h2 { margin: 0; font-weight: 400; }
h1 { font-size: 34px; line-height: 40px; letter-spacing: .25px; }
h2 { font-size: 24px; line-height: 32px; }
.play { width: 220px; height: 66px; margin-top: 15.5px; }
.getit { font: 500 13.5px Lato, sans-serif; fill: #dcdcdc; stroke: #dcdcdc; stroke-width: .3px; }
.gplay { font: 700 27.5px Lato, sans-serif; fill: #f4f4f4; }
.signin { display: flex; flex-direction: column; gap: 15px; margin-top: 31.5px; }
.btn { width: 220px; height: 40px; border: 0; border-radius: 2px; padding: 0 16px; display: flex; align-items: center; gap: 16px; font: 500 14px Roboto, sans-serif; color: #fff; box-shadow: 0 2px 2px rgba(0,0,0,.14), 0 3px 1px -2px rgba(0,0,0,.2), 0 1px 5px rgba(0,0,0,.12); }
.btn svg { width: 18px; height: 18px; }
.google { background: #fff; color: #757575; }
.facebook { background: #344e8d; }
.email { background: #d53b30; }
.select { width: 200px; height: 56px; margin: 16px 0; background: #f1f1f1; border-radius: 4px 4px 0 0; border-bottom: 1px solid #929292; display: flex; align-items: center; justify-content: space-between; padding: 0 19px 0 12px; }
.select label { display: block; font-size: 12px; line-height: 16px; color: #6f6f6f; letter-spacing: .11px; padding-top: 1px; }
.select span { display: block; font-size: 14px; line-height: 22px; color: #222; letter-spacing: .15px; }
.select i { border: 5px solid transparent; border-top-color: #737373; border-bottom: 0; margin-top: 2px; }

.mapbox { position: relative; width: 868px; height: 543px; background: #f0ede5; }
.map { width: 868px; height: 543px; }
.map path { stroke-linejoin: round; }
.park { fill: #b5d5a8; }
.gr { fill: #b5d5a8; filter: url(#coast); }
.gr.soft { opacity: .7; }
.w { fill: #9fcddb; filter: url(#coast); }
.land { fill: #f0ede5; }
.isle { fill: #e9ecd6; filter: url(#coast); }
.fw { fill: #d9e7c0; }
.fg { fill: #b5dba5; }
.tan { fill: #d6d9ae; }
.yg { fill: #cdebb0; filter: url(#coast); }
.yy { fill: #edf0d0; }
.wob { filter: url(#coast); }
.mottle { filter: url(#mottle); }
.b1, .b2, .b3, .mv, .road, .creek { fill: none; }
.b1 { stroke: #b9a2b9; stroke-width: 3; filter: url(#wobble); }
.b2 { stroke: #b59cb5; stroke-width: 4; }
.b3 { stroke: #b499b2; stroke-width: 7; }
.mv, .m { stroke: #9691b3; }
.mv { stroke-width: 2.8; }
.b3.m { stroke: #9c8fb0; stroke-width: 5.5; }
.b3.str { stroke-width: 6; }
.road { stroke: #f7ae9e; stroke-width: 2.8; }
.road.red { stroke: #e892a2; stroke-width: 4; }
.creek { stroke: #b4d7df; stroke-width: 2; }
.creek.big { stroke: #9fcddb; stroke-width: 5; }
.dots circle { fill: #fff; stroke: #444; stroke-width: .9; }
.dot { fill: #333; }
.map text { text-anchor: middle; font-family: "Noto Sans", sans-serif; paint-order: stroke; stroke: rgba(255,255,255,.65); stroke-width: 2px; stroke-linejoin: round; }
.town { font-size: 10px; fill: #222; }
.city { font-size: 12px; fill: #222; }
.country { font-size: 13px; fill: #64406a; }
.region { font-size: 11px; font-style: italic; fill: #754f7b; }
.lake { font-size: 10px; font-style: italic; fill: #4d80b3; }
.lake .big { font-size: 11.5px; }
.popup { position: absolute; left: 317px; top: 241px; width: 232px; height: 76px; padding: 14px 19.5px; background: #fff; border-radius: 12px; box-shadow: 0 3px 14px rgba(0,0,0,.4); color: #333; font: 12px/16px "Liberation Sans", sans-serif; white-space: nowrap; }
.popup::after { content: ""; position: absolute; left: 104px; top: 75.5px; border: 12px solid transparent; border-top: 11px solid #fff; border-bottom: 0; }
.popup p { margin: 0; }
```
